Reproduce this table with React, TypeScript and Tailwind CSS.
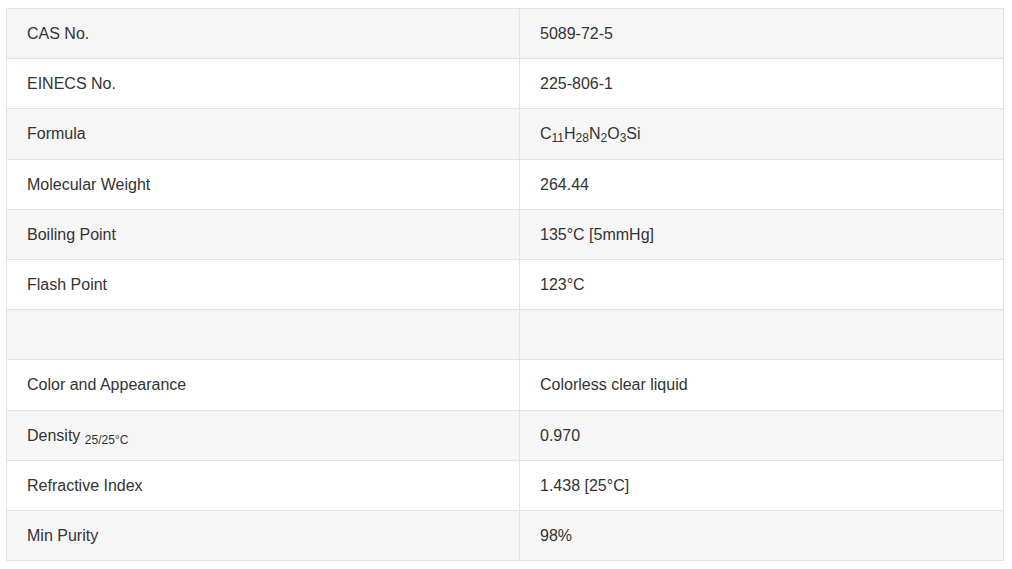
const rows: { label: React.ReactNode; value: React.ReactNode }[] = [
  { label: 'CAS No.', value: '5089-72-5' },
  { label: 'EINECS No.', value: '225-806-1' },
  {
    label: 'Formula',
    value: (
      <>
        C<sub className="text-[12px]">11</sub>H<sub className="text-[12px]">28</sub>N<sub className="text-[12px]">2</sub>O
        <sub className="text-[12px]">3</sub>Si
      </>
    ),
  },
  { label: 'Molecular Weight', value: '264.44' },
  { label: 'Boiling Point', value: '135°C [5mmHg]' },
  { label: 'Flash Point', value: '123°C' },
  { label: '', value: '' },
  { label: 'Color and Appearance', value: 'Colorless clear liquid' },
  {
    label: (
      <>
        Density <sub className="text-[12px]">25/25°C</sub>
      </>
    ),
    value: '0.970',
  },
  { label: 'Refractive Index', value: '1.438 [25°C]' },
  { label: 'Min Purity', value: '98%' },
];

export default function App() {
  return (
    <div className="bg-white min-h-screen pt-[8px] pl-[6px] font-['Liberation_Sans',Arial,sans-serif] text-[16px] text-[#333]">
      <table className="w-[998px] border-collapse table-fixed">
        <colgroup>
          <col className="w-[513px]" />
          <col />
        </colgroup>
        <tbody>
          {rows.map((r, i) => (
            <tr key={i} className={i % 2 === 0 ? 'bg-[#f6f6f6]' : 'bg-white'}>
              <td className="border border-[#e3e3e3] h-[50.2px] px-[20px] pt-[1px] pb-0 align-middle">{r.label}</td>
              <td className="border border-[#e3e3e3] h-[50.2px] px-[20px] pt-[1px] pb-0 align-middle">{r.value}</td>
            </tr>
          ))}
        </tbody>
      </table>
    </div>
  );
}
